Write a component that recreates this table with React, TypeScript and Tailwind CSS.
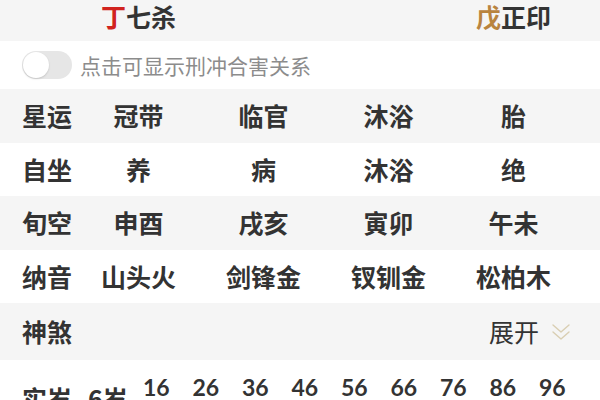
const font = { fontFamily: '"Noto Sans CJK SC", "Noto Sans", sans-serif' };

const rows = [
  { label: '星运', values: ['冠带', '临官', '沐浴', '胎'], gray: true },
  { label: '自坐', values: ['养', '病', '沐浴', '绝'], gray: false },
  { label: '旬空', values: ['申酉', '戌亥', '寅卯', '午未'], gray: true },
  { label: '纳音', values: ['山头火', '剑锋金', '钗钏金', '松柏木'], gray: false },
];

const ages = ['16', '26', '36', '46', '56', '66', '76', '86', '96'];

const App = () => {
  return (
    <div className="w-[600px] h-[400px] overflow-hidden bg-white text-[#333]" style={font}>
      {/* 十神 */}
      <div className="h-[41px] bg-[#f5f5f5] grid grid-cols-[54px_repeat(4,125px)] px-[22px] items-start pt-[2px]">
        <div />
        <div className="text-center text-[25px] font-bold leading-[28px] whitespace-nowrap">
          <span className="text-[#d1231e]">丁</span>七杀
        </div>
        <div />
        <div />
        <div className="text-center text-[25px] font-bold leading-[28px] whitespace-nowrap">
          <span className="text-[#b9843f]">戊</span>正印
        </div>
      </div>

      {/* 开关 */}
      <div className="h-[48px] flex items-center px-[22px] gap-[8px]">
        <div className="w-[50px] h-[28px] rounded-full bg-[#e6e6e6] flex items-center p-[1px]">
          <div className="w-[26px] h-[26px] rounded-full bg-white shadow-[0_1px_2px_rgba(0,0,0,0.15)]" />
        </div>
        <span className="text-[21px] text-[#8c8c8c] leading-none">点击可显示刑冲合害关系</span>
      </div>

      {rows.map((row) => (
        <div
          key={row.label}
          className={`h-[53.5px] grid grid-cols-[54px_repeat(4,125px)] px-[22px] items-center text-[25px] font-bold ${row.gray ? 'bg-[#f5f5f5]' : 'bg-white'}`}
        >
          <div className="whitespace-nowrap">{row.label}</div>
          {row.values.map((v, i) => (
            <div key={i} className="text-center whitespace-nowrap">{v}</div>
          ))}
        </div>
      ))}

      {/* 神煞 */}
      <div className="h-[57px] bg-[#f5f5f5] flex items-center justify-between pl-[22px] pr-[29px]">
        <span className="text-[25px] font-bold">神煞</span>
        <div className="flex items-center gap-[12px]">
          <span className="text-[25px]">展开</span>
          <svg width="20" height="20" viewBox="0 0 20 20" fill="none" stroke="#d9ceb2" strokeWidth="1.4" strokeLinecap="round" strokeLinejoin="round">
            <polyline points="2,3 10,10 18,3" />
            <polyline points="2,10 10,17 18,10" />
          </svg>
        </div>
      </div>

      {/* 大运 */}
      <div className="h-[60px] flex pl-[22px]">
        <div className="w-[66px] shrink-0 pt-[24px] text-[25px] font-bold leading-[28px] whitespace-nowrap">实岁</div>
        <div className="w-[55px] shrink-0 pt-[24px] text-[25px] font-bold leading-[28px] whitespace-nowrap">6岁</div>
        <div className="flex shrink-0 pt-[13px]">
          {ages.map((a) => (
            <div
              key={a}
              className="w-[49.5px] shrink-0 text-left text-[23px] font-bold leading-[28px]"
              style={{ fontFamily: 'Lato, "Noto Sans", sans-serif' }}
            >
              {a}
            </div>
          ))}
        </div>
      </div>
    </div>
  );
};

export default App;
